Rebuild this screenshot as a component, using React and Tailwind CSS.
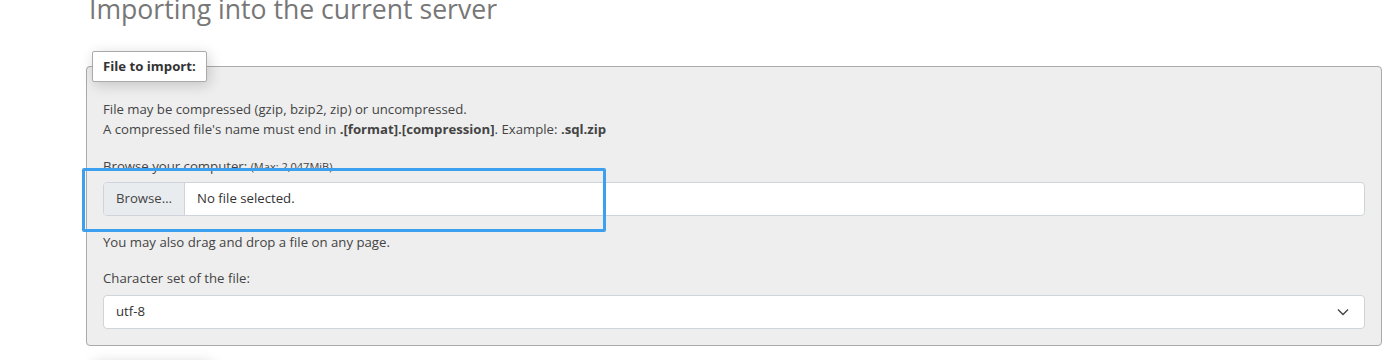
import React from "react";

export default function App() {
    return (
        <div className="min-h-screen bg-white pl-[86px] pr-[15px] text-[13.2px] text-[#444]" style={{ fontFamily: '"Open Sans", "Liberation Sans", sans-serif' }}>
            <h2 className="mt-[-9px] pl-[3px] text-[26.6px] font-normal leading-[36px] text-[#777]">
                Importing into the current server
            </h2>

            <fieldset className="relative mt-[24px] rounded-[4px] border border-[#aaa] bg-[#eee] px-4 pb-[16px] pt-[17px]">
                <legend className="-ml-[11px] rounded-[2px] border border-[#aaa] bg-white px-[10px] py-[6px] text-[13.2px] font-bold leading-[17px] text-[#333] shadow-[2px_3px_14px_rgba(0,0,0,0.18)]">
                    File to import:
                </legend>

                <p className="leading-[20px]">File may be compressed (gzip, bzip2, zip) or uncompressed.</p>
                <p className="leading-[20px]">
                    A compressed file's name must end in <b>.[format].[compression]</b>. Example: <b>.sql.zip</b>
                </p>

                <div className="mt-[17px] leading-[20px]">
                    Browse your computer: <span className="text-[11px]">(Max: 2,047MiB)</span>
                </div>

                <div className="relative mt-[5px]">
                    <div className="flex h-[34px] items-stretch overflow-hidden rounded-[4px] border border-[#ced4da] bg-white">
                        <div className="flex items-center border-r border-[#ced4da] bg-[#e9ecef] px-3 text-[#444]">
                            Browse…
                        </div>
                        <div className="flex items-center px-3 text-[#333]">No file selected.</div>
                    </div>
                    <div className="pointer-events-none absolute left-[-21px] top-[-14px] h-[64px] w-[524px] rounded-[2px] border-[3px] border-[#3d9ff0]"></div>
                </div>

                <p className="mt-[16px] leading-[20px]">You may also drag and drop a file on any page.</p>

                <div className="mt-[16px] leading-[20px]">Character set of the file:</div>
                <div className="mt-[7px] flex h-[34px] items-center justify-between rounded-[4px] border border-[#ced4da] bg-white pl-3 pr-[15px] text-[#333]">
                    <span>utf-8</span>
                    <svg width="12" height="8" viewBox="0 0 12 8" fill="none" stroke="#444" strokeWidth="1.4">
                        <path d="M1 1.5 L6 6.5 L11 1.5" />
                    </svg>
                </div>
            </fieldset>

            <div className="ml-[6px] mt-[14px] h-[30px] w-[118px] rounded-[2px] bg-white shadow-[2px_3px_14px_rgba(0,0,0,0.18)]"></div>
        </div>
    );
}
